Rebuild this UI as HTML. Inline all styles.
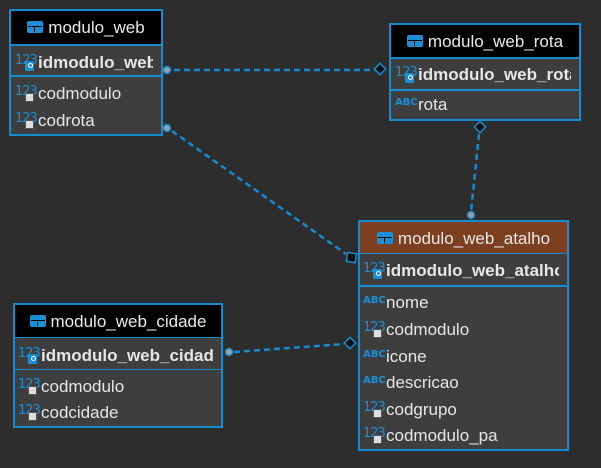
<!DOCTYPE html>
<html><head><meta charset="utf-8"><style>
body{margin:0;width:601px;height:468px;background:#2d2d2d;position:relative;overflow:hidden;font-family:"Liberation Sans","DejaVu Sans",sans-serif;}
.t{position:absolute;border:2px solid #158bd0;background:#3e3e3e;box-sizing:border-box;overflow:hidden}
.h{position:absolute;left:0;right:0;top:0;background:#000;color:#e8e8e8;font-size:17px;text-align:center;white-space:nowrap}
.h i{display:inline-block;width:16px;height:12px;background:#1a8fd6;border-radius:2px;vertical-align:0px;margin-right:5px;position:relative}
.h i:after{content:"";position:absolute;left:1px;right:1px;top:5px;height:1px;background:#000}
.h i:before{content:"";position:absolute;left:7px;top:5px;width:1px;height:6px;background:#000}
.sep{position:absolute;left:0;right:0;height:2px;background:#158bd0}
.r{position:absolute;right:8px;overflow:hidden;white-space:nowrap;color:#e6e6e6;font-size:17px;line-height:20px}
.r b{font-weight:bold}
.ic{display:inline-block;width:23px;height:20px;font-size:13px;color:#1a8fd6;vertical-align:top;position:relative;letter-spacing:-1px;line-height:15px;font-family:"DejaVu Sans",sans-serif}
.ic.a{font-weight:bold;font-size:10px;letter-spacing:0;line-height:15px}
.ic .k{position:absolute;left:10px;top:8px;width:9px;height:10px;background:#1a8fd6;border-radius:1px}
.ic .k:after{content:"";position:absolute;left:3px;top:2px;width:3px;height:3px;border:1px solid #fff;border-radius:50%}
.ic .g{position:absolute;left:10px;top:9px;width:7px;height:7px;background:#ddd;border:1px solid #555}
.ln{position:absolute}
</style></head><body>
<svg class="ln" width="601" height="468" style="left:0;top:0">
<g stroke="#158bd0" stroke-width="2.5" stroke-dasharray="6,4" fill="none">
<line x1="174" y1="70" x2="378" y2="70"/>
<line x1="172" y1="131" x2="346" y2="254"/>
<line x1="479" y1="134" x2="471" y2="212"/>
<line x1="234" y1="352" x2="344" y2="344"/>
</g>
<g fill="#a0a0a0" stroke="#158bd0" stroke-width="1.5">
<circle cx="167" cy="70" r="3.5"/><circle cx="167" cy="128" r="3.5"/>
<circle cx="471" cy="215" r="3.5"/><circle cx="229" cy="352" r="3.5"/>
</g>
<g fill="#111" stroke="#158bd0" stroke-width="1.5">
<rect x="376" y="65" width="8" height="8" transform="rotate(45 380 69)"/>
<rect x="476" y="123" width="8" height="8" transform="rotate(45 480 127)"/>
<rect x="347" y="253" width="9" height="9" transform="rotate(10 351 257)"/>
<rect x="346" y="339" width="8" height="8" transform="rotate(45 350 343)"/>
</g>
</svg>

<div class="t" style="left:9px;top:9px;width:154px;height:127px">
<div class="h" style="height:33px;line-height:33px"><i></i>modulo_web</div>
<div class="sep" style="top:33px"></div>
<div class="r" style="left:4px;top:42px"><span class="ic">123<span class="k"></span></span><b>idmodulo_web</b></div>
<div class="sep" style="top:64px"></div>
<div class="r" style="left:4px;top:73px"><span class="ic">123<span class="g"></span></span>codmodulo</div>
<div class="r" style="left:4px;top:100px"><span class="ic">123<span class="g"></span></span>codrota</div>
</div>

<div class="t" style="left:389px;top:23px;width:192px;height:98px">
<div class="h" style="height:32px;line-height:33px"><i></i>modulo_web_rota</div>
<div class="sep" style="top:32px"></div>
<div class="r" style="left:4px;top:40px"><span class="ic">123<span class="k"></span></span><b>idmodulo_web_rota</b></div>
<div class="sep" style="top:64px"></div>
<div class="r" style="left:4px;top:70px"><span class="ic a">ABC</span>rota</div>
</div>

<div class="t" style="left:358px;top:220px;width:211px;height:231px">
<div class="h" style="height:31px;line-height:33px;background:#7c3f1f"><i></i>modulo_web_atalho</div>
<div class="sep" style="top:31px;height:1px"></div>
<div class="r" style="left:3px;top:39px"><span class="ic">123<span class="k"></span></span><b>idmodulo_web_atalho</b></div>
<div class="sep" style="top:63px"></div>
<div class="r" style="left:3px;top:71px"><span class="ic a">ABC</span>nome</div>
<div class="r" style="left:3px;top:98px"><span class="ic">123<span class="g"></span></span>codmodulo</div>
<div class="r" style="left:3px;top:125px"><span class="ic a">ABC</span>icone</div>
<div class="r" style="left:3px;top:151px"><span class="ic a">ABC</span>descricao</div>
<div class="r" style="left:3px;top:178px"><span class="ic">123<span class="g"></span></span>codgrupo</div>
<div class="r" style="left:3px;top:204px"><span class="ic">123<span class="g"></span></span>codmodulo_pa</div>
</div>

<div class="t" style="left:13px;top:303px;width:210px;height:125px">
<div class="h" style="height:32px;line-height:33px"><i></i>modulo_web_cidade</div>
<div class="sep" style="top:32px;height:1px"></div>
<div class="r" style="left:3px;top:41px"><span class="ic">123<span class="k"></span></span><b>idmodulo_web_cidade</b></div>
<div class="sep" style="top:64px;height:1px"></div>
<div class="r" style="left:3px;top:72px"><span class="ic">123<span class="g"></span></span>codmodulo</div>
<div class="r" style="left:3px;top:98px"><span class="ic">123<span class="g"></span></span>codcidade</div>
</div>
</body></html>
